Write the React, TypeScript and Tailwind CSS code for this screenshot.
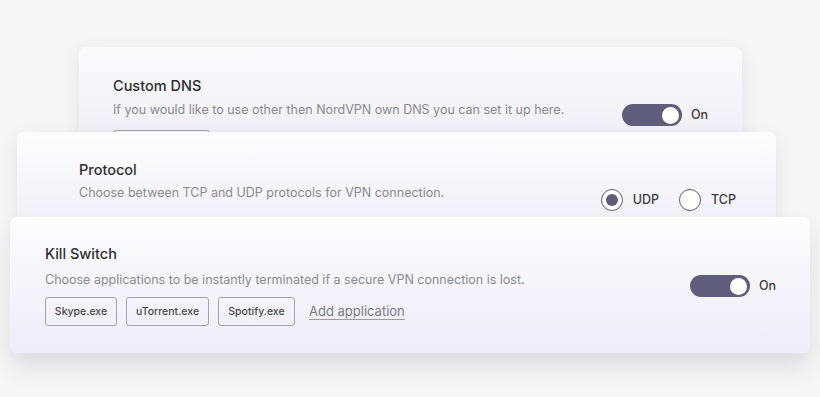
import React from "react";

function Toggle() {
  return (
    <div className="flex items-center gap-[9px]">
      <div className="w-[60px] h-[22px] rounded-full bg-[#5f5d7b] flex items-center justify-end pr-[3px]">
        <div className="w-[17px] h-[17px] rounded-full bg-white" />
      </div>
      <span className="text-[12.5px] font-medium text-[#3a3a3a]">On</span>
    </div>
  );
}

function Radio({ checked, label }: { checked: boolean; label: string }) {
  return (
    <div className="flex items-center gap-[10px]">
      <div className="w-[22px] h-[22px] rounded-full border-[1.5px] border-[#5f5d7b] flex items-center justify-center bg-white">
        {checked && <div className="w-[12px] h-[12px] rounded-full bg-[#5f5d7b]" />}
      </div>
      <span className="text-[12.5px] font-medium text-[#3a3a3a]">{label}</span>
    </div>
  );
}

function Chip({ label, w }: { label: string; w: string }) {
  return (
    <div className={`h-[29px] ${w} border border-[#a3a3a8] rounded-[3px] flex items-center justify-center text-[10.5px] font-medium text-[#4a4a4a]`}>
      {label}
    </div>
  );
}

export default function App() {
  return (
    <div
      className="w-[820px] h-[397px] bg-[#f6f6f6] overflow-hidden pt-[47px]"
      style={{ fontFamily: "Inter, 'Noto Sans', sans-serif" }}
    >
      {/* Custom DNS */}
      <div className="relative z-10 ml-[79px] w-[663px] h-[100px] rounded-[7px] bg-gradient-to-b from-[#fbfbfc] to-[#efeef6] shadow-[0_6px_18px_rgba(60,60,90,0.10)] flex justify-between pl-[34px] pr-[34px] pt-[29px]">
        <div className="flex flex-col">
          <div className="text-[14.5px] font-medium text-[#2f2f33] leading-[20px]">Custom DNS</div>
          <div className="text-[12.5px] text-[#8a8a90] leading-[18px] mt-[5px]">
            If you would like to use other then NordVPN own DNS you can set it up here.
          </div>
          <div className="mt-[11px] w-[97px] h-[29px] border border-[#a3a3a8] rounded-[3px]" />
        </div>
        <div className="pt-[28px]">
          <Toggle />
        </div>
      </div>

      {/* Protocol */}
      <div className="relative z-20 -mt-[15px] ml-[17px] w-[759px] h-[100px] rounded-[7px] bg-gradient-to-b from-[#fdfdfd] to-[#f0eff7] shadow-[0_6px_18px_rgba(60,60,90,0.10)] flex justify-between pl-[62px] pr-[40px] pt-[28px]">
        <div className="flex flex-col">
          <div className="text-[14.5px] font-medium text-[#2f2f33] leading-[20px]">Protocol</div>
          <div className="text-[12.5px] text-[#8a8a90] leading-[18px] mt-[4px]">
            Choose between TCP and UDP protocols for VPN connection.
          </div>
        </div>
        <div className="pt-[29px] flex gap-[20px] h-fit">
          <Radio checked label="UDP" />
          <Radio checked={false} label="TCP" />
        </div>
      </div>

      {/* Kill Switch */}
      <div className="relative z-30 -mt-[15px] ml-[10px] w-[800px] h-[136px] rounded-[7px] bg-gradient-to-b from-[#fdfdfd] to-[#eeedf8] shadow-[0_14px_22px_rgba(60,60,90,0.13)] flex justify-between pl-[35px] pr-[34px] pt-[27px]">
        <div className="flex flex-col">
          <div className="text-[14.5px] font-medium text-[#2f2f33] leading-[20px]">Kill Switch</div>
          <div className="text-[12.5px] text-[#8a8a90] leading-[18px] mt-[7px]">
            Choose applications to be instantly terminated if a secure VPN connection is lost.
          </div>
          <div className="flex items-center gap-[9px] mt-[8px]">
            <Chip label="Skype.exe" w="w-[72px]" />
            <Chip label="uTorrent.exe" w="w-[83px]" />
            <Chip label="Spotify.exe" w="w-[77px]" />
            <span className="ml-[5px] text-[13px] text-[#7b7b82] underline underline-offset-[3px] decoration-[#9a9aa0]">
              Add application
            </span>
          </div>
        </div>
        <div className="pt-[31px]">
          <Toggle />
        </div>
      </div>
    </div>
  );
}
